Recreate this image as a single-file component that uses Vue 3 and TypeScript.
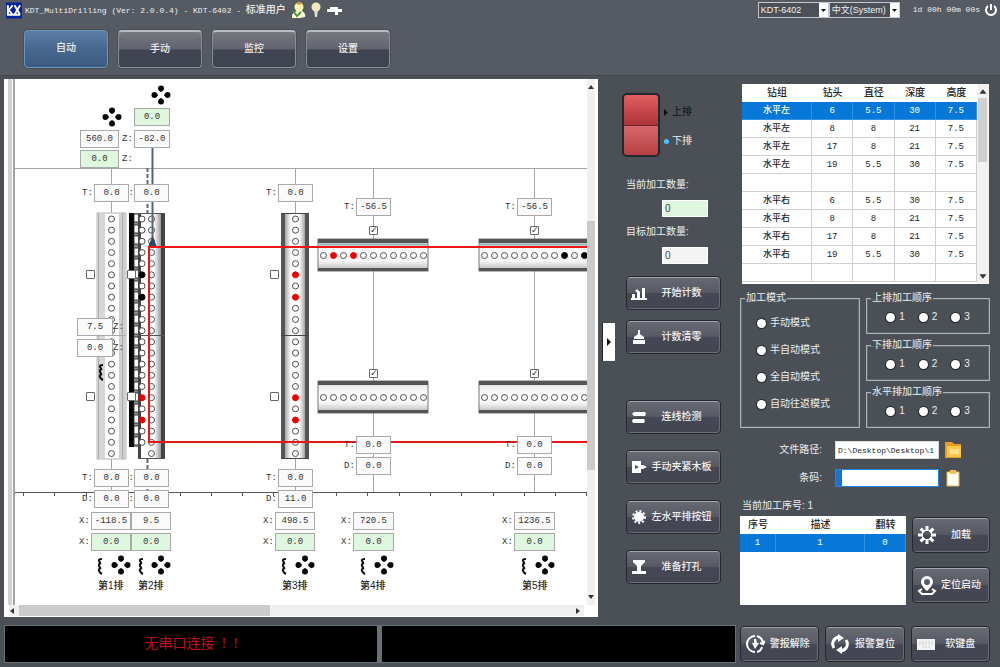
<script setup lang="ts">
import { ref } from 'vue'

interface Field { x: number; y: number; w: number; v: string; live?: boolean; label?: string; lx?: number }
interface Hole { x: number; y: number; fill: string }

const ORIGIN_X = 4
const ORIGIN_Y = 79

const tabs = ['自动', '手动', '监控', '设置']
const activeTab = ref(0)

const fields: Field[] = [
  { x: 80, y: 130, w: 39, v: '560.0', label: 'Z:', lx: 122 },
  { x: 80, y: 150, w: 39, v: '0.0', live: true, label: 'Z:', lx: 122 },
  { x: 134, y: 108, w: 36, v: '0.0', live: true },
  { x: 134, y: 130, w: 36, v: '-82.0' },
  { x: 134, y: 184, w: 35, v: '0.0', label: 'T:', lx: 123 },
  { x: 94, y: 184, w: 35, v: '0.0', label: 'T:', lx: 82 },
  { x: 278, y: 184, w: 35, v: '0.0', label: 'T:', lx: 266 },
  { x: 356, y: 198, w: 35, v: '-56.5', label: 'T:', lx: 344 },
  { x: 517, y: 198, w: 35, v: '-56.5', label: 'T:', lx: 505 },
  { x: 77, y: 318, w: 36, v: '7.5', label: 'Z:', lx: 113 },
  { x: 77, y: 339, w: 36, v: '0.0', label: 'Z:', lx: 113 },
  { x: 134, y: 469, w: 35, v: '0.0', label: 'T:', lx: 123 },
  { x: 94, y: 469, w: 35, v: '0.0', label: 'T:', lx: 82 },
  { x: 278, y: 469, w: 35, v: '0.0', label: 'T:', lx: 266 },
  { x: 134, y: 490, w: 35, v: '0.0', label: 'D:', lx: 123 },
  { x: 94, y: 490, w: 35, v: '0.0', label: 'D:', lx: 82 },
  { x: 278, y: 490, w: 35, v: '11.0', label: 'D:', lx: 266 },
  { x: 356, y: 436, w: 35, v: '0.0', label: 'T:', lx: 344 },
  { x: 356, y: 457, w: 35, v: '0.0', label: 'D:', lx: 344 },
  { x: 517, y: 436, w: 35, v: '0.0', label: 'T:', lx: 505 },
  { x: 517, y: 457, w: 35, v: '0.0', label: 'D:', lx: 505 },
  { x: 91, y: 512, w: 40, v: '-118.5', label: 'X:', lx: 79 },
  { x: 131, y: 512, w: 40, v: '9.5' },
  { x: 275, y: 512, w: 40, v: '498.5', label: 'X:', lx: 263 },
  { x: 353, y: 512, w: 41, v: '720.5', label: 'X:', lx: 341 },
  { x: 514, y: 512, w: 41, v: '1236.5', label: 'X:', lx: 502 },
  { x: 91, y: 533, w: 40, v: '0.0', live: true, label: 'X:', lx: 79 },
  { x: 131, y: 533, w: 40, v: '0.0', live: true },
  { x: 275, y: 533, w: 40, v: '0.0', live: true, label: 'X:', lx: 263 },
  { x: 353, y: 533, w: 41, v: '0.0', live: true, label: 'X:', lx: 341 },
  { x: 514, y: 533, w: 41, v: '0.0', live: true, label: 'X:', lx: 502 },
]

const captions = [
  { x: 98, t: '第1排' }, { x: 138, t: '第2排' }, { x: 282, t: '第3排' },
  { x: 360, t: '第4排' }, { x: 522, t: '第5排' },
]

const checks = [
  { x: 86, y: 270, on: false }, { x: 127, y: 270, on: false }, { x: 270, y: 270, on: false },
  { x: 86, y: 392, on: false }, { x: 127, y: 392, on: false }, { x: 270, y: 392, on: false },
  { x: 369, y: 226, on: true }, { x: 530, y: 226, on: true },
  { x: 369, y: 369, on: true }, { x: 530, y: 369, on: true },
]

const place = (x: number, y: number, w?: number) => ({
  left: `${x - ORIGIN_X}px`,
  top: `${y - ORIGIN_Y}px`,
  ...(w ? { width: `${w}px` } : {}),
})

function column(x: number, count: number, marks: Record<number, string>): Hole[] {
  return Array.from({ length: count }, (_, i) => ({ x, y: 219 + (i * 469) / 42, fill: marks[i] ?? '#fff' }))
}
function row(x: number, y: number, marks: Record<number, string>): Hole[] {
  return Array.from({ length: 11 }, (_, i) => ({ x: x + i * 10, y, fill: marks[i] ?? '#fff' }))
}

const RED = '#f00000'
const BLACK = '#000000'
const holes: Hole[] = [
  ...column(111.5, 22, {}),
  ...column(142, 21, { 5: BLACK, 7: BLACK, 16: RED, 18: RED }),
  ...column(151.5, 22, {}),
  ...column(295.5, 22, { 5: RED, 7: RED, 16: RED, 18: RED }),
  ...row(323.5, 255.5, { 1: RED, 3: RED }),
  ...row(484.5, 255.5, { 8: BLACK, 10: BLACK }),
  ...row(323.5, 397.5, {}),
  ...row(484.5, 397.5, {}),
]
const beams = [{ x: 318, y: 239 }, { x: 479, y: 239 }, { x: 318, y: 381 }, { x: 479, y: 381 }]
const ticks = Array.from({ length: 19 }, (_, i) => 23 + Math.round(i * 31.3))
const slots = Array.from({ length: 21 }, (_, i) => 214 + Math.round((i * 469) / 42))
const pads = [[161, 95], [112, 117], [121, 565], [161, 565], [305, 565], [384, 565], [545, 565]]
const springs = [[101, 372], [100, 566], [141, 566], [284, 566], [363, 566], [524, 566]]

const topActions = [{ icon: 'chart', t: '开始计数' }, { icon: 'clear', t: '计数清零' }]
const lowActions = [
  { icon: 'link', t: '连线检测' }, { icon: 'clamp', t: '手动夹紧木板' },
  { icon: 'knob', t: '左水平排按钮' }, { icon: 'drill', t: '准备打孔' },
]

const heads = ['钻组', '钻头', '直径', '深度', '高度']
const drills = [
  ['水平左', '6', '5.5', '30', '7.5'], ['水平左', '8', '8', '21', '7.5'],
  ['水平左', '17', '8', '21', '7.5'], ['水平左', '19', '5.5', '30', '7.5'],
  ['', '', '', '', ''],
  ['水平右', '6', '5.5', '30', '7.5'], ['水平右', '8', '8', '21', '7.5'],
  ['水平右', '17', '8', '21', '7.5'], ['水平右', '19', '5.5', '30', '7.5'],
  ['', '', '', '', ''],
]
const modes = ['手动模式', '半自动模式', '全自动模式', '自动往返模式']
const orders = ['上排加工顺序', '下排加工顺序', '水平排加工顺序']
const filePath = ref('D:\\Desktop\\Desktop\\1')
const barcode = ref('')
const doneCount = ref('0')
const goalCount = ref('0')
</script>

<template>
  <div class="app">
    <header>
      <div class="title">
        <svg class="logo" viewBox="0 0 17 17" aria-hidden="true">
          <rect width="17" height="17" fill="#06249c" />
          <path d="M2 3v10M3 8l4-5M3 8l4 5M9 3l6 10M15 3L9 13M1 13h14" stroke="#fff" stroke-width="2" fill="none" />
        </svg>
        <h1><span class="mono">KDT_MultiDrilling (Ver: 2.0.0.4) - KDT-6402 - </span>标准用户</h1>
        <svg class="glyphs" viewBox="0 0 52 18" aria-hidden="true">
          <path d="M2 17q-1-5 5-7h5q4 2 3 6l-5 1z" fill="#fffbd8" />
          <circle cx="9" cy="6" r="4.500" fill="#fff6b0" />
          <path d="M6 3q3-4 6-1l-2 2z" fill="#c89a2c" />
          <path d="M3 10l4 5 4-4" fill="none" stroke="#4f9a38" stroke-width="2" />
          <circle cx="26" cy="6" r="4.500" fill="#f5e8bd" />
          <path d="M24 9h4l-1 7h-2z" fill="#e4dccb" />
          <path d="M37 8h3V6h8v2h4v3h-4v3h-3v-3h-8z" fill="#fff" />
        </svg>
      </div>
      <div class="system">
        <span class="drop">
          <select aria-label="机型"><option>KDT-6402</option></select>
          <svg viewBox="0 0 9 14" aria-hidden="true"><rect width="9" height="14" fill="#fff" /><path d="M2 6h5L4.500 9z" fill="#111" /></svg>
        </span>
        <span class="drop">
          <select aria-label="语言"><option>中文(System)</option></select>
          <svg viewBox="0 0 9 14" aria-hidden="true"><rect width="9" height="14" fill="#fff" /><path d="M2 6h5L4.500 9z" fill="#111" /></svg>
        </span>
        <time>1d 00h 00m 00s</time>
        <button class="power" aria-label="退出">
          <svg viewBox="0 0 14 14"><path d="M4 3a5 5 0 1 0 6 0M7 1v6" fill="none" stroke="#fff" stroke-width="2" /></svg>
        </button>
      </div>
    </header>

    <nav>
      <button v-for="(t, i) in tabs" :key="t" class="tab" :class="{ active: i === activeTab }" @click="activeTab = i">{{ t }}</button>
    </nav>

    <main>
      <section class="left">
        <div class="stage">
          <div class="canvas">
            <div class="drawing">
              <svg width="583" height="526" viewBox="4 79 583 526" aria-hidden="true">
                <defs>
                  <linearGradient id="steel-l"><stop offset="0" stop-color="#8a8a8a" /><stop offset="1" stop-color="#fff" /></linearGradient>
                  <linearGradient id="steel-r"><stop offset="0" stop-color="#fff" /><stop offset="1" stop-color="#8a8a8a" /></linearGradient>
                  <linearGradient id="plate" x2="0" y2="1"><stop offset="0" stop-color="#ddd" /><stop offset=".4" stop-color="#fff" /><stop offset=".7" stop-color="#f4f4f4" /><stop offset="1" stop-color="#b4b4b4" /></linearGradient>
                </defs>
                <path d="M8 79h4v526H8z" fill="#d0d0d0" />
                <path d="M13 79h2v526h-2z" fill="#a2a2a2" />
                <path d="M15 168.500H587M111.500 168v45M295.500 168v45M373.500 168v324M534.500 168v324M111.500 459v33M295.500 459v33" stroke="#a6a6a6" fill="none" />
                <path d="M147.500 168v45M147.500 459v33" stroke="#666" stroke-width="2" stroke-dasharray="4 2" />
                <path d="M15 492.500H587" stroke="#555" />
                <path v-for="t in ticks" :key="t" :d="`M${t}.500 492v4`" stroke="#555" />

                <g>
                  <rect x="97" y="213" width="29" height="246" fill="#fff" stroke="#b4b4b4" />
                  <rect x="98" y="213" width="7" height="246" fill="#d6d6d6" />
                  <rect x="119" y="213" width="7" height="246" fill="#cfcfcf" />
                  <path d="M98.500 213v246M122.500 213v246M97 335.500h29" stroke="#aaa" />
                </g>
                <g>
                  <rect x="129" y="213" width="5" height="234" fill="#080808" />
                  <rect x="134" y="213" width="8" height="234" fill="#8c8c8c" />
                  <rect v-for="s in slots" :key="s" x="134" :y="s" width="5" height="8" fill="#fff" stroke="#333" />
                  <rect x="139" y="213" width="26" height="246" fill="#fff" />
                  <rect x="138" y="213" width="3" height="246" fill="#444" />
                  <rect x="154" y="213" width="8" height="246" fill="url(#steel-r)" />
                  <rect x="161" y="213" width="4" height="246" fill="#444" />
                  <path d="M138 213.500h27M138 458.500h27M138 335.500h27" stroke="#555" />
                </g>
                <g>
                  <rect x="281" y="213" width="28" height="246" fill="#fff" />
                  <rect x="283" y="213" width="8" height="246" fill="url(#steel-l)" />
                  <rect x="299" y="213" width="8" height="246" fill="url(#steel-r)" />
                  <rect x="281" y="213" width="4" height="246" fill="#555" />
                  <rect x="305" y="213" width="4" height="246" fill="#555" />
                  <path d="M281 213.500h28M281 458.500h28M281 335.500h28" stroke="#444" />
                </g>
                <g v-for="b in beams" :key="`${b.x}-${b.y}`">
                  <rect :x="b.x" :y="b.y" width="110" height="32" fill="url(#plate)" stroke="#777" />
                  <rect :x="b.x" :y="b.y" width="110" height="4" fill="#555" />
                  <rect :x="b.x" :y="b.y + 29" width="110" height="3" fill="#555" />
                </g>
                <path d="M318 244.500h110M479 244.500h108" stroke="#8cb6b4" stroke-width="2" />
                <circle v-for="(h, i) in holes" :key="i" :cx="h.x" :cy="h.y" r="3" :fill="h.fill" :stroke="h.fill === '#fff' ? '#4c4c4c' : h.fill" />
                <path d="M152.500 147v98" stroke="#4c6684" stroke-width="2" />
                <path d="M152.500 236l4 10h-8z" fill="#2b4668" />
                <path d="M587 247H149V442H587" fill="none" stroke="#ee1515" stroke-width="2" />
                <g v-for="p in pads" :key="`${p[0]}-${p[1]}`" :transform="`translate(${p[0]} ${p[1]})`">
                  <path v-for="r in [0, 90, 180, 270]" :key="r" :transform="`rotate(${r})`" d="M0-3C-2-4-3-5-3-6.500a3 3 0 0 1 6 0C3-5 2-4 0-3z" fill="#050505" />
                </g>
                <path v-for="s in springs" :key="`${s[0]}-${s[1]}`" :transform="`translate(${s[0]} ${s[1]})`" d="M2-7q-4 0-3 2t2 2q-3 1-2 3t2 2q-3 1-2 3t3 3" fill="none" stroke="#111" stroke-width="2" />
              </svg>
              <template v-for="(f, i) in fields" :key="i">
                <label v-if="f.label" class="tag" :for="`axis-${i}`" :style="place(f.lx ?? f.x, f.y)">{{ f.label }}</label>
                <input :id="`axis-${i}`" class="axis" :class="{ live: f.live }" :value="f.v" :aria-label="f.label ? undefined : '轴位置'" :style="place(f.x, f.y, f.w)" />
              </template>
              <input v-for="(c, i) in checks" :key="`c${i}`" type="checkbox" class="pick" :checked="c.on" aria-label="选择" :style="place(c.x, c.y)" />
              <span v-for="c in captions" :key="c.t" class="caption" :style="place(c.x, 578)">{{ c.t }}</span>
            </div>
            <div class="vbar">
              <svg viewBox="0 0 8 6"><path d="M1 5h6L4 1z" fill="#333" /></svg>
              <i></i>
              <svg viewBox="0 0 8 6"><path d="M1 1h6L4 5z" fill="#333" /></svg>
            </div>
            <div class="hbar">
              <svg viewBox="0 0 6 8"><path d="M5 1v6L1 4z" fill="#333" /></svg>
              <i></i>
              <svg viewBox="0 0 6 8"><path d="M1 1v6l4-3z" fill="#333" /></svg>
            </div>
          </div>

          <button class="fold" aria-label="收起面板"><svg viewBox="0 0 6 8"><path d="M1 0v8l4-4z" fill="#111" /></svg></button>

          <div class="side">
            <div class="switch">
              <button class="rocker" aria-label="上排下排切换"><span></span><span></span></button>
              <div class="states">
                <span class="off"><svg viewBox="0 0 5 7"><path d="M0 0v7l4-3.500z" fill="#111" /></svg>上排</span>
                <span><svg viewBox="0 0 5 7"><circle cx="2.500" cy="3.500" r="2.500" fill="#4cc3f5" /></svg>下排</span>
              </div>
            </div>
            <div class="count">
              <label for="done">当前加工数量:</label>
              <input id="done" v-model="doneCount" class="green" />
            </div>
            <div class="count">
              <label for="goal">目标加工数量:</label>
              <input id="goal" v-model="goalCount" />
            </div>
            <div class="stack">
              <button v-for="a in topActions" :key="a.t" class="cmd">
                <svg viewBox="0 0 16 16" aria-hidden="true">
                  <path v-if="a.icon === 'chart'" d="M0 13h16v2H0zM1 9h3v5H1zM6 7h3v7H6zM11 3h3v11h-3zM4 6l2-2 3 3-2 1z" fill="#fff" />
                  <path v-else d="M7 1h2v4l4 3v2H3V8l4-3zM2 11h12v4H2z" fill="#fff" />
                </svg>
                <span>{{ a.t }}</span>
              </button>
            </div>
            <div class="stack low">
              <button v-for="a in lowActions" :key="a.t" class="cmd">
                <svg viewBox="0 0 16 16" aria-hidden="true">
                  <path v-if="a.icon === 'link'" d="M3 3h11l1 2-1 2H3L1 5zM2 10h11l1 2-1 2H2l-1-2z" fill="#fff" />
                  <path v-else-if="a.icon === 'clamp'" fill-rule="evenodd" d="M1 2h9v4h2l4 2-4 2h-2v4H1zM4 6v4l4-2z" fill="#fff" />
                  <g v-else-if="a.icon === 'knob'" fill="#fff"><circle cx="8" cy="8" r="5" /><circle cx="8" cy="8" r="6" fill="none" stroke="#fff" stroke-width="2" stroke-dasharray="2 2" /></g>
                  <path v-else d="M2 1h12v2l-4 4v5h5v3H1v-3h5V7L2 3z" fill="#fff" />
                </svg>
                <span>{{ a.t }}</span>
              </button>
            </div>
          </div>
        </div>
        <div class="status">
          <output class="alarm">无串口连接&nbsp; !&nbsp; !</output>
          <output></output>
        </div>
      </section>

      <aside>
        <div class="grid-box">
          <table class="drills">
            <colgroup><col class="c-name" /><col /><col /><col /><col /></colgroup>
            <thead><tr><th v-for="h in heads" :key="h">{{ h }}</th></tr></thead>
            <tbody>
              <tr v-for="(r, i) in drills" :key="i" :class="{ picked: i === 0 }"><td v-for="(c, j) in r" :key="j">{{ c }}</td></tr>
            </tbody>
          </table>
          <div class="tbar">
            <svg viewBox="0 0 8 6"><path d="M1 5h6L4 1z" fill="#333" /></svg>
            <i></i>
            <svg viewBox="0 0 8 6"><path d="M1 1h6L4 5z" fill="#333" /></svg>
          </div>
        </div>

        <div class="groups">
          <fieldset class="modes">
            <legend>加工模式</legend>
            <label v-for="m in modes" :key="m"><input type="radio" name="mode" />{{ m }}</label>
          </fieldset>
          <div class="orders">
            <fieldset v-for="(o, i) in orders" :key="o">
              <legend>{{ o }}</legend>
              <label v-for="n in 3" :key="n"><input type="radio" :name="`order-${i}`" />{{ n }}</label>
            </fieldset>
          </div>
        </div>

        <div class="form">
          <label for="path">文件路径:</label>
          <input id="path" v-model="filePath" />
          <button aria-label="打开文件">
            <svg viewBox="0 0 18 18"><path d="M1 1h7l2 2h7v14H1z" fill="#e79d20" /><path d="M3 5h14v11H3z" fill="#ffc64a" /><path d="M6 8h9v5H6z" fill="#ffe08c" /></svg>
          </button>
          <label for="code">条码:</label>
          <input id="code" v-model="barcode" class="focus" />
          <button aria-label="粘贴">
            <svg viewBox="0 0 18 18"><path d="M3 3h12v14H3z" fill="#fffdf2" stroke="#e0b458" /><path d="M6 1h6v4H6z" fill="#f5bd4f" /></svg>
          </button>
        </div>

        <p class="seq">当前加工序号: 1</p>
        <div class="jobs">
          <div class="job-box">
            <table>
              <colgroup><col class="j1" /><col /><col class="j3" /></colgroup>
              <thead><tr><th>序号</th><th>描述</th><th>翻转</th></tr></thead>
              <tbody><tr class="picked"><td>1</td><td>1</td><td>0</td></tr></tbody>
            </table>
          </div>
          <div class="job-actions">
            <button class="cmd big">
              <svg viewBox="0 0 20 20" aria-hidden="true"><g stroke="#fff" stroke-width="3"><path v-for="n in 8" :key="n" d="M10 1v5" :transform="`rotate(${n * 45} 10 10)`" /></g><circle cx="10" cy="10" r="5" fill="none" stroke="#fff" stroke-width="1" /></svg>
              <span>加载</span>
            </button>
            <button class="cmd big">
              <svg viewBox="0 0 20 20" aria-hidden="true"><path fill-rule="evenodd" d="M10 1a6 6 0 0 0-6 6c0 4 6 9 6 9s6-5 6-9a6 6 0 0 0-6-6zM10 4a3 3 0 1 1 0 6 3 3 0 0 1 0-6z" fill="#fff" /><path d="M5 14l-3 2 3 3h10l3-3-3-2" fill="none" stroke="#fff" stroke-width="2" /></svg>
              <span>定位启动</span>
            </button>
          </div>
        </div>

        <div class="foot">
          <button class="cmd big">
            <svg viewBox="0 0 20 20" aria-hidden="true"><path d="M10 2a8 8 0 1 0 0 16M12 2q6 2 6 8l-3-1M18 10l2-3M12 18q4-1 5-5" fill="none" stroke="#fff" stroke-width="2" /><path d="M9 5h2l1 4h2l-4 6-3-6h2z" fill="#fff" /></svg>
            <span>警报解除</span>
          </button>
          <button class="cmd big">
            <svg viewBox="0 0 20 20" aria-hidden="true"><path d="M4 14A7 7 0 0 1 9 3M16 6a7 7 0 0 1-5 11" fill="none" stroke="#fff" stroke-width="3" /><path d="M8 0l6 4-6 4zM12 12l-6 4 6 4z" fill="#fff" /></svg>
            <span>报警复位</span>
          </button>
          <button class="cmd big">
            <svg viewBox="0 0 20 20" aria-hidden="true"><path d="M1 5h18v11H1z" fill="#f4f4f4" /><path d="M3 8h14M3 10h14M6 13h8" stroke="#ccc" stroke-dasharray="2 1" /></svg>
            <span>软键盘</span>
          </button>
        </div>
      </aside>
    </main>
  </div>
</template>

<style>
body { margin: 0; background: #4a5055; }
</style>

<style scoped>
* { box-sizing: border-box; }
.app {
  min-height: 100vh; display: flex; flex-direction: column; background: #4a5055; color: #eceef0;
  font: 10px/14px "Liberation Sans", "Noto Sans CJK SC", sans-serif; overflow: hidden;
}
button, input, select { font: inherit; color: inherit; margin: 0; padding: 0; border: 0; border-radius: 0; min-width: 0; }
button { background: none; cursor: pointer; }
svg { display: block; }
.mono { font-family: "Liberation Mono", monospace; font-size: 8px; }
header { height: 20px; display: flex; justify-content: space-between; background: #565b63; padding: 0 3px 0 6px; }
.title { display: flex; align-items: center; }
.logo { width: 16px; height: 17px; margin-right: 3px; }
h1 { margin: 0; font-size: 10px; line-height: 16px; font-weight: 500; white-space: pre; }
.glyphs { width: 52px; height: 18px; margin-left: 4px; }
.system { display: flex; align-items: center; }
.drop { display: flex; width: 71px; height: 16px; border: 1px solid #c4c7cb; }
.drop select { flex: 1; appearance: none; background: #4c5159; padding-left: 2px; font-size: 9px; line-height: 13px; }
.drop svg { width: 9px; height: 14px; }
time { margin: 0 4px 0 13px; font: 8px/14px "Liberation Mono", monospace; white-space: nowrap; }
.power { margin-right: -1px; }
.power svg { width: 14px; height: 14px; }

nav { display: flex; gap: 10px; padding: 10px 24px 7px; background: #565b63; border-bottom: 1px solid #41464b; }
.tab {
  width: 84px; height: 38px; border: 1px solid #8a8f96; border-top: 2px solid #b9bcc1; border-radius: 4px;
  background: linear-gradient(#777981, #61636d 48%, #414552 52%, #3f424f); font-weight: 500; line-height: 30px; padding-bottom: 2px; box-shadow: 0 0 0 1px #484d53;
}
.tab.active { background: linear-gradient(#5c7da7, #48678f 50%, #3d5a82); border: 1px solid #6798b5; }

main { flex: 1; display: grid; grid-template-columns: minmax(0, 1fr) 250px; column-gap: 4px; padding: 3px 10px 5px 4px; }
.left { display: flex; flex-direction: column; min-width: 0; }
.stage { flex: 1; display: flex; }
.canvas { flex: 1; min-width: 0; background: #fff; color: #222; display: grid; grid-template: minmax(526px, 1fr) 12px / minmax(0, 1fr) 11px; }
.drawing { position: relative; overflow: hidden; }
.axis {
  position: absolute; height: 18px; text-align: center; background: #fafafa; border: 1px solid #a9a9a9; color: #333;
  font: 9px/15px "Liberation Mono", monospace;
}
.axis.live { background: #dff7df; }
.tag { position: absolute; font: 9px/18px "Liberation Mono", monospace; color: #333; }
.pick { position: absolute; appearance: none; width: 9px; height: 9px; background: #fff; border: 1px solid #666; border-radius: 1px; }
.pick:checked::before { content: "✓"; display: block; font: 9px/6px "DejaVu Sans", sans-serif; color: #333; }
.caption { position: absolute; white-space: nowrap; font-weight: 500; line-height: 16px; }
.vbar { display: flex; flex-direction: column; width: 8px; background: #f0f0f0; padding: 5px 0; }
.vbar svg { width: 8px; height: 6px; }
.vbar i { flex: 249; margin: 131px 0 124px; background: #cbcbcb; }
.hbar { display: flex; align-items: stretch; background: #f0f0f0; height: 11px; margin: 0 3px 0 5px; padding-right: 3px; justify-content: space-between; }
.hbar svg { width: 6px; height: 8px; margin-top: 2px; }
.hbar i { width: 44%; margin-right: 53%; margin-left: 2px; background: #cbcbcb; }
.fold { flex: none; width: 12px; height: 38px; margin: 0 7px 13px 5px; align-self: center; background: #fff; box-shadow: -1px 0 #222; }
.fold svg { width: 6px; height: 8px; margin: 0 auto; }
.side { flex: none; width: 114px; padding: 14px 15px 0 0; display: flex; flex-direction: column; }
.switch { display: flex; gap: 4px; height: 64px; }
.rocker { width: 38px; display: flex; flex-direction: column; border: 2px solid #24282c; border-radius: 5px; overflow: hidden; background: #7c2225; }
.rocker span { flex: 1; width: 100%; background: linear-gradient(#e25f63, #ad3338); }
.rocker span + span { background: linear-gradient(#d6686b, #b53f43); border-top: 1px solid #6f262a; }
.states { display: flex; flex-direction: column; justify-content: space-between; padding: 12px 0 9px; }
.states span { display: flex; align-items: center; gap: 3px; }
.states svg { width: 5px; height: 7px; }
.states .off { color: #111; }
.count { margin-left: 4px; display: flex; flex-direction: column; }
.count:nth-child(2) { margin-top: 21px; }
.count:nth-child(3) { margin-top: 8px; }
.count input { width: 46px; height: 17px; margin: 8px 0 0 36px; padding-left: 2px; background: #f4f4f4; border: 1px solid #fff; color: #444; }
.count .green { background: #dff7df; }
.stack { margin: 12px 0 0 4px; display: flex; flex-direction: column; gap: 10px; }
.stack.low { margin-top: 46px; gap: 16px; }
.cmd {
  height: 34px; display: flex; align-items: center; padding: 0 4px; border: 1px solid #25282e; border-radius: 4px; color: #f0f1f3; font-weight: 500; white-space: nowrap;
  background: linear-gradient(#686a74, #575963 48%, #454754 52%, #444551); box-shadow: inset 0 1px #a2a4ab, inset -1px -1px #6b6e77;
}
.cmd svg { width: 16px; height: 16px; flex: none; }
.cmd span { flex: 1; text-align: center; }
.status { display: grid; grid-template-columns: 373fr 353fr; gap: 5px; margin: 8px 0 0 0; border: 1px solid #687078; background: #687078; }
.status output { background: #000; height: 36px; text-align: center; }
.alarm { color: #c40f1a; font: 14px/35px "Liberation Serif", "Noto Sans CJK SC", serif; }

aside { display: flex; flex-direction: column; padding-top: 5px; min-width: 0; }
.grid-box { display: flex; height: 200px; margin: 0 1px 0 2px; background: #fff; }
table { border-collapse: separate; border-spacing: 0; table-layout: fixed; background: #fff; color: #222; width: 100%; }
th, td { padding: 0; height: 18px; line-height: 16px; text-align: center; font-weight: 500; }
td { font-size: 9px; font-family: "Liberation Mono", "Noto Sans CJK SC", monospace; }
.drills { flex: 1; min-width: 0; height: 198px; }
.drills td { border-right: 1px solid #d0d0d0; border-bottom: 1px solid #d0d0d0; }
.c-name { width: 70px; }
.picked td { background: #0878d8; color: #fff; border-color: #3293e2; }
.tbar { width: 12px; background: #f2f2f2; display: flex; flex-direction: column; padding: 4px 0; }
.tbar svg { width: 12px; height: 7px; }
.tbar i { height: 64px; margin: 3px 2px auto 1px; background: #d0d0d0; }
.groups { display: grid; grid-template-columns: 120px 1fr; gap: 6px; margin-top: 7px; }
fieldset { min-width: 0; margin: 0; padding: 0; border: 1px solid #aeb2b5; box-shadow: inset 0 0 0 1px #62676b; }
legend { margin-left: 4px; padding: 0 1px; line-height: 14px; height: 14px; white-space: nowrap; }
.modes { display: flex; flex-direction: column; }
.modes label { display: flex; align-items: center; gap: 4px; margin: 11px 0 2px 16px; }
.modes label + label { margin-top: 11px; }
.orders { display: flex; flex-direction: column; gap: 4px; }
.orders fieldset { height: 43px; text-align: center; white-space: nowrap; }
.orders legend { text-align: left; }
.orders label { display: inline-flex; align-items: center; gap: 4px; margin: 5px 7px 0; }
input[type="radio"] { appearance: none; width: 9px; height: 9px; border-radius: 50%; background: #fff; box-shadow: 0 0 0 1px #25292c; }
.form { display: grid; grid-template-columns: 1fr 104px 18px; column-gap: 5px; row-gap: 10px; margin: 13px 28px 0 0; align-items: center; }
.form label { text-align: right; padding-right: 8px; }
.form input { height: 18px; background: #fff; color: #222; padding: 0 2px; font: 8px/16px "Liberation Mono", monospace; border: 1px solid #ddd; }
.form .focus { border-color: #2484d8; box-shadow: inset 6px 0 #1876cf; }
.form svg { width: 18px; height: 18px; }
.seq { margin: 12px 0 0 2px; }
.jobs { display: grid; grid-template-columns: 1fr 78px; gap: 6px; margin-top: 3px; }
.job-box { height: 89px; background: #fff; }
.job-box .picked td { border-right: 1px solid #3293e2; }
.j1 { width: 36px; }
.j3 { width: 41px; }
.job-actions { display: flex; flex-direction: column; gap: 14px; padding-top: 1px; }
.cmd.big { height: 36px; }
.cmd.big svg { width: 20px; height: 20px; }
.foot { display: grid; grid-template-columns: repeat(3, 1fr); gap: 6px; margin-top: auto; }
aside .foot { padding-bottom: 1px; }
</style>
